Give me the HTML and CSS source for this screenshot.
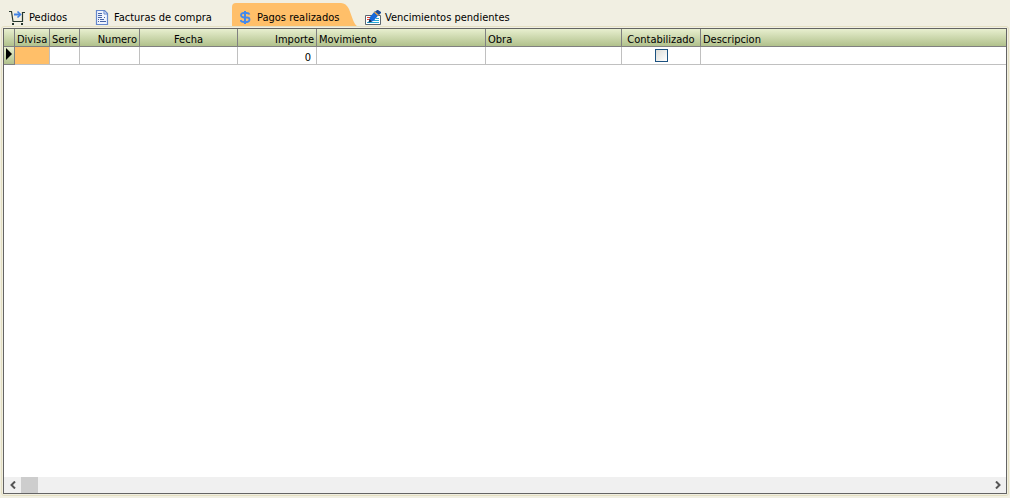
FILE: index.html
```html
<!DOCTYPE html>
<html lang="es">
<head>
<meta charset="utf-8">
<title>Pagos realizados</title>
<link rel="stylesheet" href="styles.css">
</head>
<body>
<div class="tabs" role="tablist">
  <button class="tab tab-orders" role="tab" type="button">
    <svg class="icon" viewBox="0 0 16 16" aria-hidden="true"><path d="M0 1.500H2.500L4 11.500H13.500V2.500H16" fill="none" stroke="#27382e" stroke-width="1.200"/><path d="M3 13h2v2H3zM12 13h2v2h-2z" fill="#27382e"/><path d="M5 4.500h6" stroke="#3f82e6" stroke-width="2"/><path d="M8.500 1.500l3 3-3 3" fill="none" stroke="#3f82e6" stroke-width="1.600"/></svg>
    <span>Pedidos</span>
  </button>
  <button class="tab tab-invoices" role="tab" type="button">
    <svg class="icon" viewBox="0 0 16 16" aria-hidden="true"><path d="M1.500 .5h8l3 3v11h-11z" fill="#eef3fd" stroke="#6487cc" stroke-width="1.200"/><path d="M9 1v3h3" fill="none" stroke="#6487cc"/><path d="M3 3.500h4M3 5.500h4M3 7.500h4M3 9.500h1M5 9.500h4M3 11.500h1M5 11.500h6M9 7.500h1" stroke="#4664a6"/></svg>
    <span>Facturas de compra</span>
  </button>
  <button class="tab tab-payments" role="tab" type="button" aria-selected="true">
    <svg class="tab-shape" viewBox="0 0 125 23" preserveAspectRatio="none" aria-hidden="true"><path d="M0 23V4Q0 0 4 0H109Q114 0 117 6L121 17Q123 22 125 23Z" fill="#ffbf69"/></svg>
    <svg class="icon" viewBox="0 0 16 16" aria-hidden="true"><path d="M9.500 4.500Q9 3 6.500 3H4Q1 3 1 5T4 7.500H7Q9.500 7.500 9.500 9.500T7 12H4Q1 12 .5 10" fill="none" stroke="#4389ed" stroke-width="1.800"/><path d="M5 1v13" stroke="#4389ed" stroke-width="2"/></svg>
    <span>Pagos realizados</span>
  </button>
  <button class="tab tab-due" role="tab" type="button">
    <svg class="icon" viewBox="0 0 16 16" aria-hidden="true"><path d="M.5 5.500h15v9H.5z" fill="#fff" stroke="#5b6670"/><path d="M2 7.500h4M2 9.500h3" stroke="#e6402c"/><path d="M2 12.500h12M9 10.500h5M11 8.500h3" stroke="#24a9d5"/><path d="M3.500 12.500L5 7l5-6 4 3.500L8.500 11z" fill="#1768d8"/><path d="M10 2l2-2h1l3 2v1l-2 2z" fill="#1a4c9b"/><path d="M9.500 2l4 3.500" stroke="#f3a33d" stroke-width="1.200"/><path d="M3.500 12.500L4.500 9l2.500 2.500z" fill="#172c49"/></svg>
    <span>Vencimientos pendientes</span>
  </button>
</div>
<main class="panel">
  <div class="grid">
    <div class="grid-body">
      <table class="table">
        <colgroup><col class="c-mark"><col class="c-currency"><col class="c-series"><col class="c-number"><col class="c-date"><col class="c-amount"><col class="c-movement"><col class="c-work"><col class="c-posted"><col></colgroup>
        <thead>
          <tr><th></th><th>Divisa</th><th>Serie</th><th class="right">Numero</th><th class="center">Fecha</th><th class="right">Importe</th><th>Movimiento</th><th>Obra</th><th class="center">Contabilizado</th><th>Descripcion</th></tr>
        </thead>
        <tbody>
          <tr><td class="mark"><svg class="marker" viewBox="0 0 6 12" aria-hidden="true"><path d="M0 0l6 6-6 6z" fill="#000"/></svg></td><td class="current"></td><td></td><td></td><td></td><td class="right amount">0</td><td></td><td></td><td class="posted"><input class="check" type="checkbox" aria-label="Contabilizado"></td><td></td></tr>
        </tbody>
      </table>
    </div>
    <div class="scrollbar">
      <button class="arrow" type="button" aria-label="Desplazar a la izquierda"><svg viewBox="0 0 6 8"><path d="M5 .5L1.500 4 5 7.500" fill="none" stroke="#555" stroke-width="2"/></svg></button>
      <div class="track"><div class="thumb"></div></div>
      <button class="arrow" type="button" aria-label="Desplazar a la derecha"><svg viewBox="0 0 6 8"><path d="M1 .5L4.500 4 1 7.500" fill="none" stroke="#555" stroke-width="2"/></svg></button>
    </div>
  </div>
</main>
</body>
</html>
```
FILE: styles.css
```css
* { box-sizing: border-box; }
body {
  margin: 0;
  padding: 3px 1px 2px;
  min-height: 100vh;
  display: flex;
  flex-direction: column;
  background: #f1efe2;
  color: #000;
  font: 11px/13px "DejaVu Sans Condensed", "DejaVu Sans", sans-serif;
}
button { font: inherit; color: inherit; border: 0; background: none; }
.tabs { display: flex; height: 23px; }
.tab {
  position: relative;
  display: flex;
  align-items: center;
  gap: 4px;
  padding: 6px 8px 0;
  white-space: nowrap;
}
.tab span { position: relative; }
.tab-orders { width: 86px; }
.tab-invoices { width: 145px; gap: 3px; }
.tab-payments { width: 125px; gap: 1px; }
.tab-shape { position: absolute; inset: 0; width: 100%; height: 100%; }
.icon { position: relative; width: 16px; height: 16px; flex: none; }
.panel {
  flex: 1;
  display: flex;
  padding: 1px;
  border: 1px solid #e4dfc2;
  border-radius: 3px;
}
.grid {
  flex: 1;
  min-width: 0;
  display: flex;
  flex-direction: column;
  border: 1px solid #646464;
  background: #fff;
}
.grid-body { flex: 1; overflow: hidden; }
.table { width: 100%; table-layout: fixed; border-collapse: separate; border-spacing: 0; }
.c-mark { width: 11px; }
.c-currency { width: 35px; }
.c-series { width: 30px; }
.c-number { width: 60px; }
.c-date { width: 98px; }
.c-amount { width: 79px; }
.c-movement { width: 169px; }
.c-work { width: 136px; }
.c-posted { width: 79px; }
.table th {
  height: 18px;
  padding: 4px 2px 0;
  font-weight: normal;
  text-align: left;
  white-space: nowrap;
  border-right: 1px solid #808080;
  border-bottom: 1px solid #808080;
  background: linear-gradient(#e8efcf, #b1c18c);
}
.table td {
  height: 18px;
  padding: 4px 2px 0;
  border-right: 1px solid #c0c0c0;
  border-bottom: 1px solid #c0c0c0;
}
.table th:last-child, .table td:last-child { border-right: 0; }
.table .right { text-align: right; }
.table .center { text-align: center; }
.table .amount { padding-right: 5px; }
.table .current { background: #ffbf69; }
.table .posted { padding: 2px; }
.table .mark {
  padding: 1px 2px 0;
  vertical-align: top;
  border-color: #808080;
  background: linear-gradient(#e8efcf, #b1c18c);
}
.marker { display: block; width: 6px; height: 12px; }
.check {
  appearance: none;
  display: block;
  width: 13px;
  height: 13px;
  margin: 0 auto;
  border: 1px solid #1c5180;
  background: linear-gradient(135deg, #dcdcd7, #fff);
}
.scrollbar { display: flex; height: 16px; background: #f0f0f0; }
.arrow { width: 17px; padding: 0; display: flex; align-items: center; justify-content: center; }
.arrow svg { width: 6px; height: 8px; }
.track { flex: 1; display: flex; }
.thumb { width: 17px; background: #cdcdcd; }
```
